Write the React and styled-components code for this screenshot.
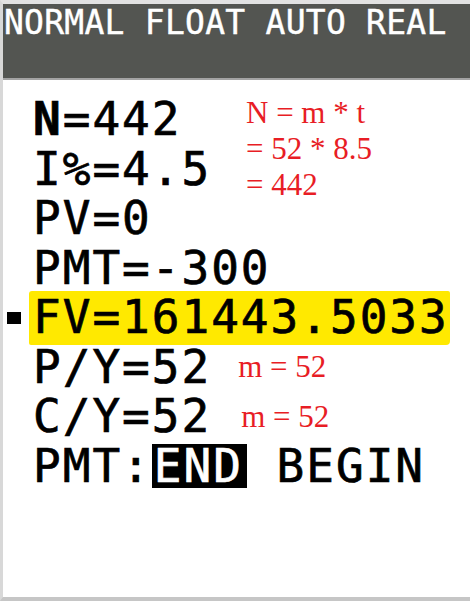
import React from "react";
import styled, { createGlobalStyle } from "styled-components";

const Global = createGlobalStyle`
  html, body { margin: 0; padding: 0; background: #ffffff; }
  * { box-sizing: border-box; }
`;

const Screen = styled.div`
  width: 470px;
  height: 601px;
  background: #ffffff;
  border-top: 4px solid #e2e2e2;
  border-left: 3px solid #d8d8d8;
  border-bottom: 4px solid #c6c6c6;
  display: flex;
  flex-direction: column;
  font-family: "DejaVu Sans Mono", "Liberation Mono", monospace;
  font-feature-settings: "zero" 1;
  overflow: hidden;
`;

const StatusBar = styled.div`
  height: 76px;
  flex: none;
  background: #535551;
  border-bottom: 2px solid #a3a3a3;
  color: #ffffff;
  font-size: 33px;
  line-height: 33px;
  letter-spacing: 0.25px;
  -webkit-text-stroke: 0.4px #ffffff;
  padding: 2px 0 0 1px;
  white-space: pre;
`;

const Body = styled.div`
  padding-top: 15px;
  display: flex;
  flex-direction: column;
`;

const TopSection = styled.div`
  display: grid;
  grid-template-columns: 243px 1fr;
  align-items: start;
`;

const Rows = styled.div`
  display: flex;
  flex-direction: column;
`;

const Row = styled.div`
  display: flex;
  align-items: center;
  height: 49.5px;
  padding-left: 4px;
`;

const Marker = styled.span`
  flex: none;
  width: 14px;
  height: 12px;
  margin-right: 8px;
  background: ${(p) => (p.$on ? "#000000" : "transparent")};
`;

const Value = styled.span`
  display: block;
  font-size: 46px;
  line-height: 49.5px;
  letter-spacing: 2px;
  color: #000000;
  -webkit-text-stroke: 0.7px #000000;
  white-space: pre;
  padding: ${(p) => (p.$highlight ? "2px 1px 2px 4px" : "0 3px 0 4px")};
  margin: ${(p) => (p.$highlight ? "-2px 0" : "0")};
  background: ${(p) => (p.$highlight ? "#ffe900" : "transparent")};
  border-radius: ${(p) => (p.$highlight ? "3px 2px 4px 2px" : "0")};
`;

const Cursor = styled.span`
  font-weight: bold;
`;

const Selected = styled.span`
  display: inline-block;
  line-height: 44px;
  background: #000000;
  color: #ffffff;
  -webkit-text-stroke: 0.7px #ffffff;
  padding: 0 4px 0 2px;
`;

const Note = styled.div`
  font-family: "Liberation Serif", "Times New Roman", serif;
  color: #e81d25;
  font-size: 31px;
  line-height: 36px;
  white-space: pre;
`;

const NoteBlock = styled(Note)`
  margin-top: 0;
`;

const InlineNote = styled(Note)`
  margin-left: ${(p) => p.$gap}px;
`;

export default function App() {
  return (
    <>
      <Global />
      <Screen>
        <StatusBar>NORMAL FLOAT AUTO REAL</StatusBar>
        <Body>
          <TopSection>
            <Rows>
              <Row>
                <Marker />
                <Value>
                  <Cursor>N</Cursor>=442
                </Value>
              </Row>
              <Row>
                <Marker />
                <Value>I%=4.5</Value>
              </Row>
              <Row>
                <Marker />
                <Value>PV=0</Value>
              </Row>
            </Rows>
            <NoteBlock>
              {"N = m * t\n= 52 * 8.5\n= 442"}
            </NoteBlock>
          </TopSection>
          <Row>
            <Marker />
            <Value>PMT=-300</Value>
          </Row>
          <Row>
            <Marker $on />
            <Value $highlight>FV=161443.5033</Value>
          </Row>
          <Row>
            <Marker />
            <Value>P/Y=52</Value>
            <InlineNote $gap={24}>m = 52</InlineNote>
          </Row>
          <Row>
            <Marker />
            <Value>C/Y=52</Value>
            <InlineNote $gap={27}>m = 52</InlineNote>
          </Row>
          <Row>
            <Marker />
            <Value>
              PMT:<Selected>END</Selected> BEGIN
            </Value>
          </Row>
        </Body>
      </Screen>
    </>
  );
}
